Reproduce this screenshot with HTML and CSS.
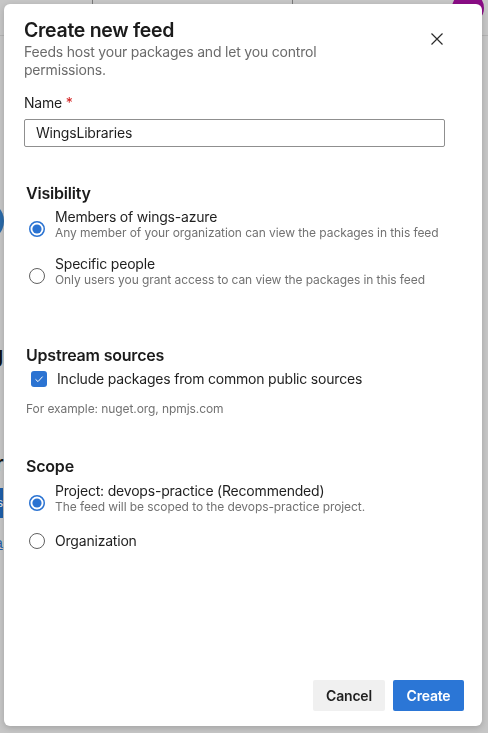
FILE: index.html
```html
<!DOCTYPE html>
<html lang="en">
<head>
<meta charset="utf-8">
<title>Create new feed</title>
<link rel="stylesheet" href="styles.css">
</head>
<body>
<div class="page">
  <div class="topbar">
    <div class="seg seg-a"></div>
    <div class="seg seg-b"></div>
    <div class="avatar"></div>
  </div>
  <div class="backdrop-col">
    <div class="bg-circle"></div>
    <div class="bg-letter bg-g">g</div>
    <div class="bg-letter bg-r">r</div>
    <div class="bg-button">s</div>
    <div class="bg-link">a</div>
  </div>
</div>

<div class="dialog" role="dialog" aria-labelledby="dlg-title">
  <div class="dialog-header">
    <div class="header-text">
      <h1 id="dlg-title" class="title">Create new feed</h1>
      <p class="subtitle">Feeds host your packages and let you control permissions.</p>
    </div>
    <button class="close" aria-label="Close">
      <svg width="12" height="12" viewBox="0 0 12 12"><path d="M0.5 0.5 L11.5 11.5 M11.5 0.5 L0.5 11.5" stroke="#2b2b2b" stroke-width="1.2" fill="none"/></svg>
    </button>
  </div>

  <div class="dialog-body">
    <label class="field-label">Name <span class="req">*</span></label>
    <div class="input">WingsLibraries</div>

    <h2 class="section-title sec-visibility">Visibility</h2>
    <div class="option opt-first">
      <svg class="radio" width="16" height="16" viewBox="0 0 16 16"><circle cx="8" cy="8" r="7.25" fill="#fff" stroke="#2b73d2" stroke-width="1.5"/><circle cx="8" cy="8" r="4.6" fill="#2b73d2"/></svg>
      <div class="option-text">
        <div class="option-label">Members of wings-azure</div>
        <div class="option-desc">Any member of your organization can view the packages in this feed</div>
      </div>
    </div>
    <div class="option opt-next">
      <svg class="radio" width="16" height="16" viewBox="0 0 16 16"><circle cx="8" cy="8" r="7.5" fill="#fff" stroke="#616161" stroke-width="1"/></svg>
      <div class="option-text">
        <div class="option-label">Specific people</div>
        <div class="option-desc">Only users you grant access to can view the packages in this feed</div>
      </div>
    </div>

    <h2 class="section-title sec-upstream">Upstream sources</h2>
    <div class="check-row">
      <span class="checkbox">
        <svg width="10" height="10" viewBox="0 0 10 10"><path d="M1.5 5.3 L4 7.6 L8.6 2.6" stroke="#fff" stroke-width="1" fill="none"/></svg>
      </span>
      <span class="check-label">Include packages from common public sources</span>
    </div>
    <p class="hint">For example: nuget.org, npmjs.com</p>

    <h2 class="section-title sec-scope">Scope</h2>
    <div class="option opt-project">
      <svg class="radio" width="16" height="16" viewBox="0 0 16 16"><circle cx="8" cy="8" r="7.25" fill="#fff" stroke="#2b73d2" stroke-width="1.5"/><circle cx="8" cy="8" r="4.6" fill="#2b73d2"/></svg>
      <div class="option-text">
        <div class="option-label">Project: devops-practice (Recommended)</div>
        <div class="option-desc">The feed will be scoped to the devops-practice project.</div>
      </div>
    </div>
    <div class="option opt-org">
      <svg class="radio" width="16" height="16" viewBox="0 0 16 16"><circle cx="8" cy="8" r="7.5" fill="#fff" stroke="#616161" stroke-width="1"/></svg>
      <div class="option-text">
        <div class="option-label">Organization</div>
      </div>
    </div>
  </div>

  <div class="dialog-footer">
    <button class="btn btn-cancel">Cancel</button>
    <button class="btn btn-create">Create</button>
  </div>
</div>
</body>
</html>
```

FILE: styles.css
```css
* { box-sizing: border-box; }

html, body {
  margin: 0;
  padding: 0;
  height: 100%;
}

body {
  background: #c6c6c6;
  font-family: Inter, "Noto Sans", "Liberation Sans", sans-serif;
  color: #1f1f1f;
  overflow: hidden;
}

/* ---------- dimmed page behind the dialog ---------- */
.page {
  height: 100%;
}

.topbar {
  display: flex;
  height: 36px;
  border-bottom: 1px solid #b3b3b3;
}

.seg {
  height: 100%;
  border-right: 1px solid #7a7a7a;
}
.seg-a { width: 93px; }
.seg-b { width: 200px; }

.avatar {
  width: 32px;
  height: 32px;
  border-radius: 50%;
  background: #8b0d86;
  margin-left: auto;
  margin-right: 4px;
  margin-top: -8px;
}

.backdrop-col {
  display: flex;
  flex-direction: column;
  align-items: flex-start;
  width: 4px;
}

.bg-circle {
  width: 40px;
  height: 40px;
  border-radius: 50%;
  background: #2a6aa8;
  margin-left: -36px;
  margin-top: 165px;
}

.bg-letter {
  font-family: "Liberation Sans", sans-serif;
  font-weight: 700;
  font-size: 22px;
  line-height: 24px;
  color: #111;
  white-space: nowrap;
}
.bg-g { margin-left: -10px; margin-top: 102px; }
.bg-r { margin-left: -5px; margin-top: 85px; }

.bg-button {
  width: 40px;
  height: 30px;
  background: #1d5ea8;
  color: #e8e8e8;
  font-family: "Liberation Sans", sans-serif;
  font-size: 13px;
  line-height: 30px;
  text-align: right;
  margin-left: -37px;
  margin-top: 12px;
}

.bg-link {
  font-family: "Liberation Sans", sans-serif;
  font-size: 14px;
  line-height: 16px;
  color: #1d5ea8;
  text-decoration: underline;
  margin-left: -5px;
  margin-top: 17px;
}

/* ---------- dialog ---------- */
.dialog {
  position: fixed;
  left: 4px;
  top: 4px;
  width: 478px;
  height: 722px;
  background: #fff;
  border-radius: 6px;
  box-shadow: 0 2px 6px rgba(0, 0, 0, 0.18);
  display: flex;
  flex-direction: column;
  padding: 14px 18px 15px 20px;
  letter-spacing: -0.2px;
}

.dialog-header {
  display: flex;
  align-items: flex-start;
}

.header-text {
  flex: 1;
}

.title {
  margin: 0;
  font-size: 19.5px;
  line-height: 24px;
  font-weight: 600;
  color: #1b1b1b;
  letter-spacing: -0.3px;
}

.subtitle {
  margin: 1px 0 0;
  font-size: 14px;
  line-height: 18px;
  color: #6b6b6b;
  width: 340px;
}

.close {
  width: 32px;
  height: 32px;
  margin: 5px 11px 0 0;
  padding: 0;
  border: 0;
  background: transparent;
  display: flex;
  align-items: center;
  justify-content: center;
}

.dialog-body {
  display: flex;
  flex-direction: column;
  align-items: flex-start;
}

.field-label {
  margin-top: 14px;
  font-size: 14px;
  line-height: 20px;
  color: #1f1f1f;
}
.req { color: #d11a1a; }

.input {
  margin-top: 6px;
  width: 421px;
  height: 28px;
  border: 1px solid #8f8f8f;
  border-radius: 2px;
  padding: 0 11px;
  font-size: 14px;
  line-height: 26px;
  color: #1f1f1f;
}

.section-title {
  margin: 0;
  padding-left: 2px;
  font-size: 16px;
  line-height: 22px;
  font-weight: 600;
  color: #1b1b1b;
}
.sec-visibility { margin-top: 35px; }
.sec-upstream { margin-top: 56px; }
.sec-scope { margin-top: 38px; }

.option {
  display: flex;
  align-items: center;
  padding-left: 5px;
}
.opt-first { margin-top: 5px; }
.opt-next { margin-top: 15px; }
.opt-project { margin-top: 6px; }
.opt-org { margin-top: 18px; }

.radio {
  flex: none;
  margin-right: 10px;
}
.opt-first .radio,
.opt-next .radio,
.opt-project .radio {
  margin-top: 8px;
}

.option-label {
  font-size: 14px;
  line-height: 16px;
  color: #1f1f1f;
}

.option-desc {
  font-size: 12px;
  line-height: 16px;
  color: #727272;
  letter-spacing: -0.08px;
}

.check-row {
  margin-top: 3px;
  display: flex;
  align-items: center;
  height: 20px;
  padding-left: 7px;
}

.checkbox {
  width: 16px;
  height: 16px;
  border-radius: 3px;
  background: #2b73d2;
  display: flex;
  align-items: center;
  justify-content: center;
  margin-right: 10px;
}

.check-label {
  font-size: 14px;
  line-height: 20px;
  color: #1f1f1f;
}

.hint {
  margin: 12px 0 0;
  padding-left: 2px;
  font-size: 12px;
  line-height: 16px;
  color: #727272;
  letter-spacing: -0.08px;
}

.dialog-footer {
  margin-top: auto;
  display: flex;
  justify-content: flex-end;
  gap: 8px;
}

.btn {
  height: 31px;
  border: 0;
  border-radius: 2px;
  font-family: inherit;
  font-size: 14px;
  font-weight: 600;
  letter-spacing: -0.2px;
  padding: 0;
}

.btn-cancel {
  width: 72px;
  background: #f0f0f0;
  color: #1f1f1f;
}

.btn-create {
  width: 71px;
  background: #2b76d6;
  color: #fff;
}
```
